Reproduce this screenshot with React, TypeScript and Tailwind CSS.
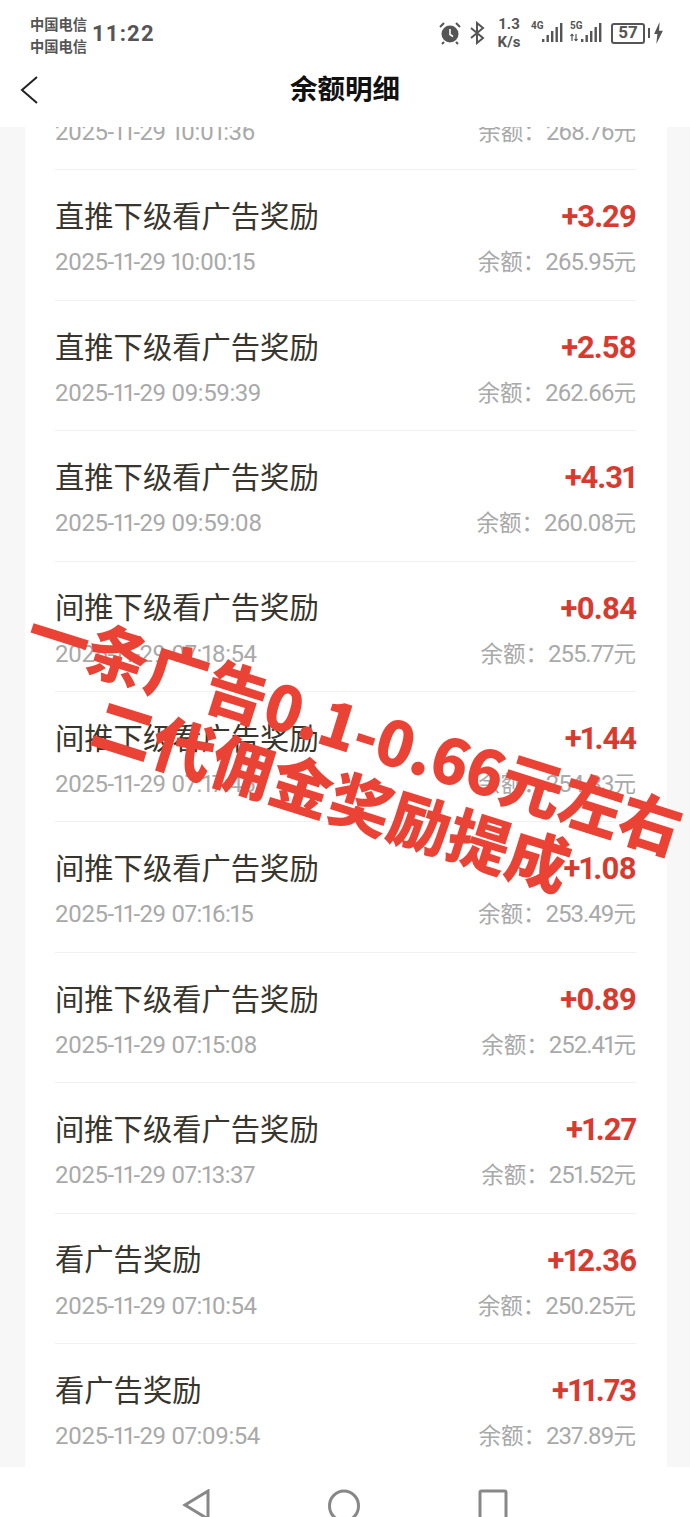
const rows = [
  { title: '直推下级看广告奖励', amount: '+3.29', time: '2025-11-29 10:01:36', balance: '268.76' },
  { title: '直推下级看广告奖励', amount: '+3.29', time: '2025-11-29 10:00:15', balance: '265.95' },
  { title: '直推下级看广告奖励', amount: '+2.58', time: '2025-11-29 09:59:39', balance: '262.66' },
  { title: '直推下级看广告奖励', amount: '+4.31', time: '2025-11-29 09:59:08', balance: '260.08' },
  { title: '间推下级看广告奖励', amount: '+0.84', time: '2025-11-29 07:18:54', balance: '255.77' },
  { title: '间推下级看广告奖励', amount: '+1.44', time: '2025-11-29 07:17:45', balance: '254.33' },
  { title: '间推下级看广告奖励', amount: '+1.08', time: '2025-11-29 07:16:15', balance: '253.49' },
  { title: '间推下级看广告奖励', amount: '+0.89', time: '2025-11-29 07:15:08', balance: '252.41' },
  { title: '间推下级看广告奖励', amount: '+1.27', time: '2025-11-29 07:13:37', balance: '251.52' },
  { title: '看广告奖励', amount: '+12.36', time: '2025-11-29 07:10:54', balance: '250.25' },
  { title: '看广告奖励', amount: '+11.73', time: '2025-11-29 07:09:54', balance: '237.89' },
]

const cjk = "font-['Noto_Sans_CJK_SC',sans-serif]"
const num = "font-['Roboto',sans-serif]"

const Bars = ({ arrows }: { arrows?: boolean }) => (
  <svg width="32" height="24" viewBox="0 0 32 24" fill="#555">
    <rect x="11" y="18" width="2.400" height="3" />
    <rect x="15.500" y="14" width="2.400" height="7" />
    <rect x="20" y="10" width="2.400" height="11" />
    <rect x="24.500" y="6" width="2.400" height="15" />
    <rect x="29" y="2" width="2.400" height="19" />
    {arrows && <path d="M2 20v-7M2 13l-1.500 2M2 13l1.500 2M6 13v7M6 20l-1.500-2M6 20l1.500-2" stroke="#555" strokeWidth="1.200" fill="none" />}
  </svg>
)

const StatusBar = () => (
  <div className="flex h-[66px] items-center justify-between pl-[30px] pr-[27px] text-[#555]">
    <div className="flex items-center gap-[5px]">
      <div className={`${cjk} mt-[3px] flex flex-col text-[14.250px] font-bold leading-[22px]`}>
        <span>中国电信</span>
        <span>中国电信</span>
      </div>
      <span className={`${num} text-[22px] font-bold tracking-[1.200px]`}>11:22</span>
    </div>
    <div className="flex items-center">
      <svg width="22" height="24" viewBox="0 0 22 24" className="mr-[8px]">
        <circle cx="11" cy="13" r="8.500" fill="#555" />
        <path d="M1 6l4-4M21 6l-4-4M5 21l-2 2M17 21l2 2" stroke="#555" strokeWidth="2" />
        <path d="M11 8v5.500l3 2" stroke="#fff" strokeWidth="1.600" fill="none" />
      </svg>
      <svg width="16" height="24" viewBox="0 0 16 24" fill="none" stroke="#555" strokeWidth="2" className="mr-[10px]">
        <path d="M2 7l12 10-6 5V2l6 5L2 17" />
      </svg>
      <div className={`${num} mr-[8px] flex w-[28px] flex-col items-center text-[15px] font-bold leading-[18px]`}>
        <span>1.3</span>
        <span>K/s</span>
      </div>
      <div className="relative mr-[7px] h-[24px] w-[32px]">
        <Bars />
        <span className={`${num} absolute left-0 top-[-1px] text-[10px] font-bold leading-[12px]`}>4G</span>
      </div>
      <div className="relative mr-[9px] h-[24px] w-[32px]">
        <Bars arrows />
        <span className={`${num} absolute left-0 top-[-1px] text-[10px] font-bold leading-[12px]`}>5G</span>
      </div>
      <div className={`${num} flex h-[21px] w-[34px] items-center justify-center rounded-[3px] border-2 border-[#555] text-[17px] font-bold`}>
        57
      </div>
      <div className="ml-[3px] mr-[4px] h-[10px] w-[2px] bg-[#555]" />
      <svg width="9" height="22" viewBox="0 0 8 20" fill="#555">
        <path d="M5 0L0 11h3l-1 9 6-12H4.500z" />
      </svg>
    </div>
  </div>
)

const Header = () => (
  <div className="relative z-10 h-[61px] bg-white">
    <div className="flex h-[47px] items-center pl-[20px]">
      <svg width="20" height="30" viewBox="0 0 20 30" fill="none" stroke="#222" strokeWidth="2">
        <path d="M17 2L2 15l15 13" />
      </svg>
      <h1 className={`${cjk} ml-[250px] mt-[-3px] text-[27.500px] font-bold text-[#111]`}>余额明细</h1>
    </div>
  </div>
)

const Row = ({ row }: { row: (typeof rows)[number] }) => (
  <div className="flex h-[130.400px] flex-col border-b border-[#f1f1f1] pt-[27px]">
    <div className="flex h-[36px] items-center justify-between">
      <span className={`${cjk} mt-[-1px] text-[29.300px] leading-none text-[#38362c]`}>{row.title}</span>
      <span className={`${num} proportional-nums mt-[3px] text-[31px] font-bold leading-none tracking-[-1px] text-[#d93a30]`}>
        {row.amount}
      </span>
    </div>
    <div className="mt-[11px] flex h-[36px] items-center justify-between text-[#a9a9a9]">
      <span className={`${num} proportional-nums text-[24px] tracking-[-0.500px]`}>{row.time}</span>
      <span className={`${cjk} text-[22.500px]`}>
        余额：<span className={`${num} proportional-nums text-[24px] tracking-[-1px]`}>{row.balance}</span>元
      </span>
    </div>
  </div>
)

const NavBar = () => (
  <div className="relative z-10 flex h-[50px] flex-none justify-center gap-[118px] bg-white pt-[22px]">
    <svg width="28" height="32" viewBox="0 0 28 32" fill="none" stroke="#888" strokeWidth="3" className="flex-none">
      <path d="M26 2L3 16l23 14z" />
    </svg>
    <svg width="32" height="34" viewBox="0 0 32 34" fill="none" stroke="#888" strokeWidth="3" className="flex-none">
      <ellipse cx="16" cy="17" rx="14.500" ry="15" />
    </svg>
    <svg width="30" height="32" viewBox="0 0 30 32" fill="none" stroke="#888" strokeWidth="3" className="flex-none">
      <rect x="2" y="2" width="26" height="28" rx="1.500" />
    </svg>
  </div>
)

const Watermark = () => (
  <div className={`${cjk} pointer-events-none absolute left-[41px] top-[592px] z-20 origin-top-left rotate-[17.500deg] whitespace-nowrap text-[62px] font-black leading-[69px] text-[#ea4335]`}>
    <div>
      一条广告<span className="tracking-[-1px]">0.1-0.66</span>元左右
    </div>
    <div className="ml-[90px]">二代佣金奖励提成</div>
  </div>
)

export default function App() {
  return (
    <div className="relative flex h-[1517px] w-[690px] flex-col overflow-hidden bg-white">
      <StatusBar />
      <Header />
      <div className="flex-1 overflow-hidden bg-[#f7f7f7] pl-[25px] pr-[23px]">
        <div className="mt-[-87px] bg-white pl-[30px] pr-[31px]">
          {rows.map((row) => (
            <Row key={row.time} row={row} />
          ))}
        </div>
      </div>
      <NavBar />
      <Watermark />
    </div>
  )
}
